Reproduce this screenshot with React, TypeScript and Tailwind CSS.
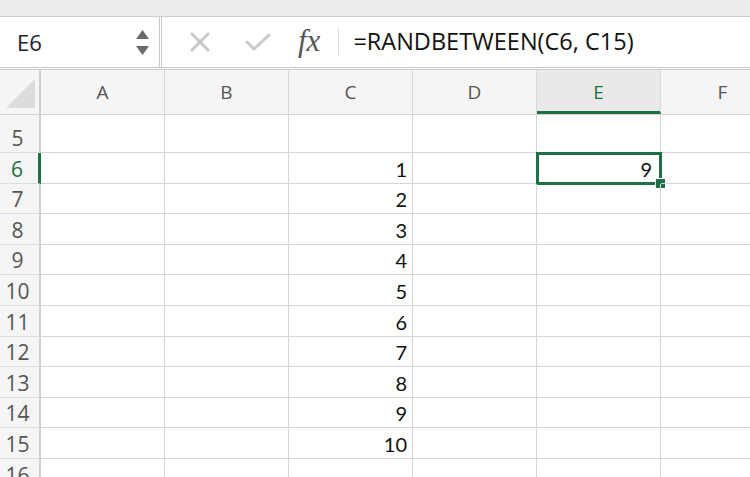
import React from 'react';

const COLS = ['A', 'B', 'C', 'D', 'E', 'F'];
const ROWS = [5, 6, 7, 8, 9, 10, 11, 12, 13, 14, 15, 16];

const C_VALUES: Record<number, string> = {
  6: '1', 7: '2', 8: '3', 9: '4', 10: '5', 11: '6', 12: '7', 13: '8', 14: '9', 15: '10',
};

function rowHeight(r: number) {
  if (r === 5) return 'h-[38px]';
  return 'h-[30.6px]';
}

export default function App() {
  return (
    <div className="w-[750px] h-[477px] overflow-hidden bg-white select-none" style={{ fontFamily: '"Open Sans", "Noto Sans", sans-serif' }}>
      {/* top strip */}
      <div className="h-[17px] bg-[#ececec] border-b border-[#cdcdcd]" />

      {/* formula bar */}
      <div className="h-[50px] flex bg-white">
        <div className="w-[162px] flex items-center border-r-[3px] border-double border-[#c9c9c9]">
          <span className="ml-[17px] text-[22px] text-[#222] flex-1">E6</span>
          <div className="mr-[10px] flex flex-col gap-[7px] items-center">
            <svg width="13" height="9" viewBox="0 0 13 9"><path d="M6.5 0 L13 9 L0 9 Z" fill="#6b6b6b" /></svg>
            <svg width="13" height="9" viewBox="0 0 13 9"><path d="M0 0 L13 0 L6.5 9 Z" fill="#6b6b6b" /></svg>
          </div>
        </div>
        <div className="flex items-center flex-1">
          <svg className="ml-[28px]" width="20" height="20" viewBox="0 0 20 20">
            <path d="M2 2 L18 18 M18 2 L2 18" stroke="#c9c9c9" strokeWidth="3" strokeLinecap="round" />
          </svg>
          <svg className="ml-[35px]" width="26" height="20" viewBox="0 0 26 20">
            <path d="M2 10 L9 17 L24 3" stroke="#c9c9c9" strokeWidth="3" fill="none" strokeLinecap="round" strokeLinejoin="round" />
          </svg>
          <span className="ml-[27px] text-[31px] italic text-[#555] leading-none -mt-[4px]" style={{ fontFamily: '"Liberation Serif", "DejaVu Serif", serif' }}>
            fx
          </span>
          <div className="ml-[18px] w-px h-[26px] bg-[#dcdcdc]" />
          <span className="ml-[14px] text-[23.5px] text-[#111]">=RANDBETWEEN(C6, C15)</span>
        </div>
      </div>

      {/* separator */}
      <div className="h-[3px] border-t border-b border-[#c9c9c9] bg-white" />

      {/* column headers */}
      <div className="flex h-[45px] bg-[#f5f5f5] border-b border-[#d4d4d4]">
        <div className="w-[41px] shrink-0 border-r-2 border-[#cfcfcf] flex items-end justify-end pb-[6px] pr-[4px]">
          <svg width="29" height="29" viewBox="0 0 29 29"><path d="M29 0 L29 29 L0 29 Z" fill="#dcdcdc" /></svg>
        </div>
        {COLS.map((c) => (
          <div
            key={c}
            className={`w-[124px] shrink-0 border-r border-[#d9d9d9] flex items-center justify-center text-[19px] ${
              c === 'E' ? 'bg-[#e9e9e9] text-[#1e7145] border-b-[3px] border-b-[#1e7145] pt-[3px]' : 'text-[#555]'
            }`}
          >
            {c}
          </div>
        ))}
      </div>

      {/* rows */}
      {ROWS.map((r) => (
        <div key={r} className={`flex ${rowHeight(r)}`}>
          <div
            className={`w-[41px] shrink-0 bg-[#f5f5f5] border-b border-[#dcdcdc] flex items-end justify-center pr-[4px] text-[21px] leading-[28px] ${
              r === 6 ? 'text-[#1e7145] bg-[#ececec] border-r-[3px] border-r-[#1e7145]' : 'text-[#555] border-r-2 border-r-[#cfcfcf]'
            }`}
          >
            {r}
          </div>
          {COLS.map((c) => (
            <div
              key={c}
              className="relative w-[124px] shrink-0 border-r border-b border-[#d6d6d6] flex items-end justify-end pr-[5px] pb-[1px] text-[20px] leading-[26px] text-[#111]"
              style={{ fontFamily: 'Lato, "Open Sans", sans-serif' }}
            >
              {c === 'C' && C_VALUES[r]}
              {c === 'E' && r === 6 && (
                <>
                  <span className="pr-[3px]">9</span>
                  <div className="absolute -left-[1px] -top-[1px] -right-[2px] -bottom-[2px] border-[3px] border-[#1e7145]" />
                  <div className="absolute -right-[6px] -bottom-[6px] w-[11px] h-[11px] bg-[#1e7145] border border-white" />
                </>
              )}
            </div>
          ))}
        </div>
      ))}
    </div>
  );
}
